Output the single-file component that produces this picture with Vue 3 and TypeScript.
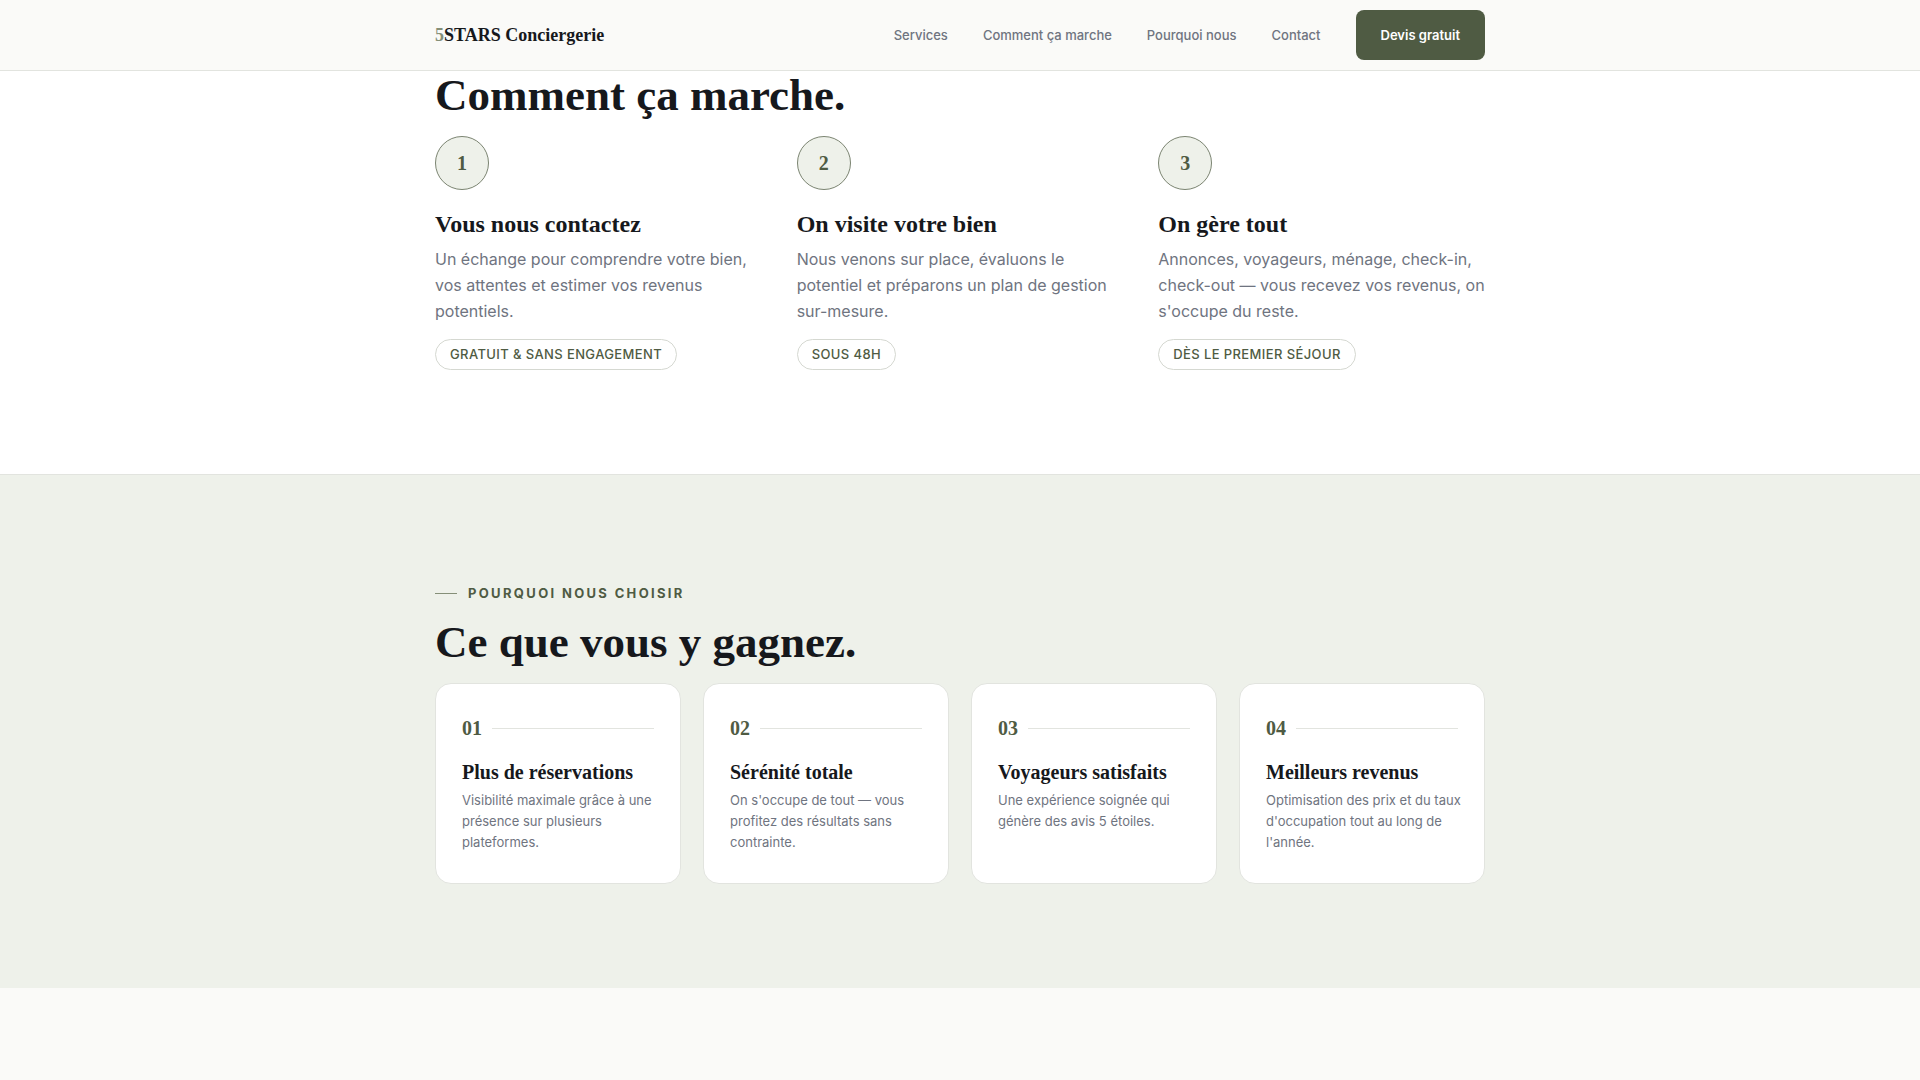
<script setup lang="ts">
interface Link {
  label: string
  href: string
}

interface Step {
  title: string
  text: string
  tag: string
}

interface Benefit {
  title: string
  text: string
}

const links: Link[] = [
  { label: 'Services', href: '#services' },
  { label: 'Comment ça marche', href: '#comment' },
  { label: 'Pourquoi nous', href: '#pourquoi' },
  { label: 'Contact', href: '#contact' },
]

const steps: Step[] = [
  {
    title: 'Vous nous contactez',
    text: 'Un échange pour comprendre votre bien, vos attentes et estimer vos revenus potentiels.',
    tag: 'Gratuit & sans engagement',
  },
  {
    title: 'On visite votre bien',
    text: 'Nous venons sur place, évaluons le potentiel et préparons un plan de gestion sur-mesure.',
    tag: 'Sous 48h',
  },
  {
    title: 'On gère tout',
    text: "Annonces, voyageurs, ménage, check-in, check-out — vous recevez vos revenus, on s'occupe du reste.",
    tag: 'Dès le premier séjour',
  },
]

const benefits: Benefit[] = [
  {
    title: 'Plus de réservations',
    text: 'Visibilité maximale grâce à une présence sur plusieurs plateformes.',
  },
  {
    title: 'Sérénité totale',
    text: "On s'occupe de tout — vous profitez des résultats sans contrainte.",
  },
  {
    title: 'Voyageurs satisfaits',
    text: 'Une expérience soignée qui génère des avis 5 étoiles.',
  },
  {
    title: 'Meilleurs revenus',
    text: "Optimisation des prix et du taux d'occupation tout au long de l'année.",
  },
]
</script>

<template>
  <div class="page">
    <header class="header">
      <div class="container bar">
        <a class="logo" href="#"><span class="logo-accent">5</span>STARS Conciergerie</a>
        <nav class="nav" aria-label="Navigation principale">
          <a v-for="link in links" :key="link.href" class="nav-link" :href="link.href">{{ link.label }}</a>
          <a class="cta" href="#devis">Devis gratuit</a>
        </nav>
      </div>
    </header>

    <main>
      <section id="comment" class="how">
        <div class="container">
          <h2 class="heading">Comment ça marche.</h2>
          <ol class="steps">
            <li v-for="(step, i) in steps" :key="step.title" class="step">
              <span class="step-number">{{ i + 1 }}</span>
              <h3 class="step-title">{{ step.title }}</h3>
              <p class="step-text">{{ step.text }}</p>
              <span class="tag">{{ step.tag }}</span>
            </li>
          </ol>
        </div>
      </section>

      <section id="pourquoi" class="why">
        <div class="container">
          <p class="eyebrow">Pourquoi nous choisir</p>
          <h2 class="heading">Ce que vous y gagnez.</h2>
          <div class="cards">
            <article v-for="(benefit, i) in benefits" :key="benefit.title" class="card">
              <div class="card-number">0{{ i + 1 }}</div>
              <h3 class="card-title">{{ benefit.title }}</h3>
              <p class="card-text">{{ benefit.text }}</p>
            </article>
          </div>
        </div>
      </section>
    </main>
  </div>
</template>

<style>
body {
  margin: 0;
  background: #fafaf8;
}
</style>

<style scoped>
.page {
  --ink: #16181c;
  --muted: #6f7480;
  --green: #4f5b43;
  --sage: #eef1ea;
  --line: #e2e4df;
  --serif: 'Liberation Serif', serif;
  color: var(--ink);
  font-family: Inter, sans-serif;
}

.container {
  box-sizing: content-box;
  max-width: 1050px;
  margin: 0 auto;
  padding: 0 24px;
}

.header {
  position: sticky;
  top: 0;
  z-index: 1;
  background: #fafaf8;
  border-bottom: 1px solid var(--line);
}

.bar {
  display: flex;
  align-items: center;
  justify-content: space-between;
  min-height: 70px;
}

.logo {
  color: var(--ink);
  font: 700 18px/24px var(--serif);
  text-decoration: none;
}

.logo-accent {
  color: #858f78;
}

.nav {
  display: flex;
  align-items: center;
  gap: 35px;
  font-size: 13px;
  line-height: 20px;
}

.nav-link {
  color: var(--muted);
  font-weight: 500;
  text-decoration: none;
}

.cta {
  padding: 15px 25px;
  border-radius: 8px;
  background: var(--green);
  color: #fff;
  font-weight: 600;
  text-decoration: none;
}

.how {
  padding: 0 0 104px;
  background: #fff;
  border-bottom: 1px solid var(--line);
}

.heading {
  margin: 0;
  font: 700 45px/48px var(--serif);
}

.steps {
  display: grid;
  grid-template-columns: repeat(3, 1fr);
  gap: 35px;
  margin: 17px 0 0;
  padding: 0;
  list-style: none;
}

.step {
  display: flex;
  flex-direction: column;
  align-items: flex-start;
}

.step-number {
  display: flex;
  align-items: center;
  justify-content: center;
  box-sizing: border-box;
  width: 54px;
  height: 54px;
  border: 1px solid #7b8471;
  border-radius: 50%;
  background: var(--sage);
  color: var(--green);
  font: 700 20px/24px var(--serif);
}

.step-title {
  margin: 19px 0 7px;
  font: 700 24px/30px var(--serif);
}

.step-text {
  margin: 0 0 15px;
  color: var(--muted);
  font-size: 16px;
  line-height: 26px;
}

.tag {
  padding: 5px 14px;
  border: 1px solid #d5d8d1;
  border-radius: 16px;
  color: var(--green);
  font-size: 13px;
  font-weight: 500;
  line-height: 19px;
  letter-spacing: 0.03em;
  text-transform: uppercase;
}

.why {
  padding: 105px 0 104px;
  background: var(--sage);
}

.eyebrow {
  display: flex;
  align-items: center;
  gap: 11px;
  margin: 0 0 12px;
  color: var(--green);
  font-size: 13px;
  font-weight: 700;
  line-height: 26px;
  letter-spacing: 0.18em;
  text-transform: uppercase;
}

.eyebrow::before {
  content: '';
  width: 22px;
  height: 1px;
  background: #858f78;
}

.cards {
  display: grid;
  grid-template-columns: repeat(4, 1fr);
  gap: 22px;
  margin-top: 17px;
}

.card {
  padding: 32px 26px 30px;
  border: 1px solid var(--line);
  border-radius: 16px;
  background: #fff;
}

.card-number {
  display: flex;
  align-items: center;
  gap: 10px;
  color: var(--green);
  font: 700 20px/24px var(--serif);
}

.card-number::after {
  content: '';
  flex: 1;
  height: 1px;
  background: var(--line);
}

.card-title {
  margin: 20px 0 6px;
  font: 700 20px/24px var(--serif);
}

.card-text {
  margin: 0 -4px 0 0;
  color: var(--muted);
  font-size: 13px;
  line-height: 21px;
}

@media (max-width: 900px) {
  .steps,
  .cards {
    grid-template-columns: 1fr;
  }

  .nav-link {
    display: none;
  }
}
</style>
